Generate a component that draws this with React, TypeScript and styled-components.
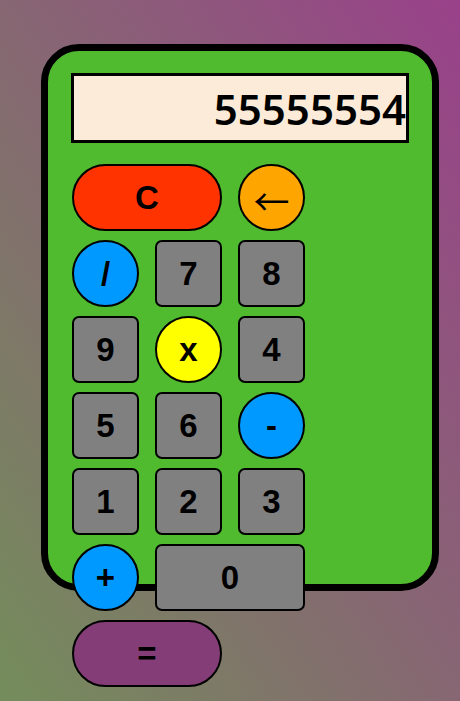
import React, { useState } from 'react';
import styled, { createGlobalStyle, css } from 'styled-components';

const GlobalStyle = createGlobalStyle`
  html, body {
    margin: 0;
    padding: 0;
    min-height: 100%;
  }
  body {
    min-height: 100vh;
    background: linear-gradient(to top right, #748d5b, #99418a);
    font-family: "Liberation Sans", Arial, sans-serif;
  }
`;

type Kind = 'digit' | 'op' | 'mul' | 'clear' | 'back' | 'equals';

interface Key {
  label: string;
  kind: Kind;
  wide?: boolean;
}

const keys: Key[] = [
  { label: 'C', kind: 'clear', wide: true },
  { label: '←', kind: 'back' },
  { label: '/', kind: 'op' },
  { label: '7', kind: 'digit' },
  { label: '8', kind: 'digit' },
  { label: '9', kind: 'digit' },
  { label: 'x', kind: 'mul' },
  { label: '4', kind: 'digit' },
  { label: '5', kind: 'digit' },
  { label: '6', kind: 'digit' },
  { label: '-', kind: 'op' },
  { label: '1', kind: 'digit' },
  { label: '2', kind: 'digit' },
  { label: '3', kind: 'digit' },
  { label: '+', kind: 'op' },
  { label: '0', kind: 'digit', wide: true },
  { label: '=', kind: 'equals', wide: true },
];

const colors: Record<Kind, string> = {
  digit: '#808080',
  op: '#0099ff',
  mul: '#ffff00',
  clear: '#ff3300',
  back: '#ffa500',
  equals: '#853d77',
};

const App: React.FC = () => {
  const [value, setValue] = useState<string>('55555554');

  const handleKey = (key: Key) => {
    if (key.kind === 'clear') setValue('');
    else if (key.kind === 'back') setValue((v: string) => v.slice(0, -1));
    else if (key.kind === 'equals') {
      try {
        // eslint-disable-next-line no-new-func
        const result = Function(`return (${value.replace(/x/g, '*')})`)();
        setValue(String(result));
      } catch (err) {
        setValue('Error');
      }
    } else setValue((v: string) => v + key.label);
  };

  return (
    <>
      <GlobalStyle />
      <Page>
        <Calculator>
          <Display>{value}</Display>
          <Keypad>
            {keys.map((key: Key) => (
              <KeyButton
                key={key.label}
                $kind={key.kind}
                $wide={!!key.wide}
                onClick={() => handleKey(key)}
              >
                {key.label}
              </KeyButton>
            ))}
          </Keypad>
        </Calculator>
      </Page>
    </>
  );
};

export default App;

const Page = styled.div`
  padding: 44px 0 0 41px;
`;

const Calculator = styled.div`
  box-sizing: border-box;
  width: 398px;
  height: 547px;
  padding: 22px 23px;
  background-color: #50bb2f;
  border: 7px solid #000;
  border-radius: 38px;
`;

const Display = styled.div`
  box-sizing: border-box;
  width: 338px;
  height: 70px;
  background-color: #fbebd8;
  border: 3px solid #000;
  font-family: "Noto Sans", "DejaVu Sans", sans-serif;
  font-size: 42px;
  font-weight: 600;
  line-height: 66px;
  text-align: right;
  color: #000;
  white-space: nowrap;
`;

const Keypad = styled.div`
  display: grid;
  grid-template-columns: repeat(3, 67px);
  grid-auto-rows: 67px;
  column-gap: 16px;
  row-gap: 9px;
  margin-top: 21px;
  margin-left: 1px;
`;

const KeyButton = styled.button<{ $kind: Kind; $wide: boolean }>`
  box-sizing: border-box;
  padding: 0;
  background-color: ${(props) => colors[props.$kind]};
  border: 2px solid #000;
  border-radius: ${(props) => (props.$kind === 'digit' ? '7px' : '34px')};
  font-family: "Liberation Sans", Arial, sans-serif;
  font-size: 33px;
  font-weight: bold;
  color: #000;
  cursor: pointer;
  ${(props) =>
    props.$wide &&
    css`
      grid-column: span 2;
    `}
  ${(props) =>
    props.$kind === 'back' &&
    css`
      font-family: "Noto Sans CJK JP", sans-serif;
      font-weight: normal;
      font-size: 36px;
      padding-top: 4px;
    `}
`;
